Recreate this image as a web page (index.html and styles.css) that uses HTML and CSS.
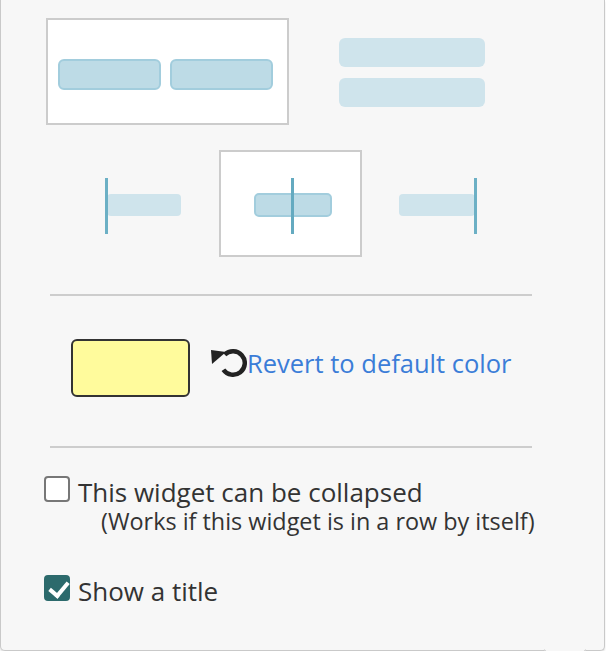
FILE: index.html
```html
<!DOCTYPE html>
<html lang="en">
<head>
  <meta charset="UTF-8">
  <title>Widget Settings</title>
  <link rel="stylesheet" href="styles.css">
</head>
<body>
  <div class="panel">

    <div class="row row-wide">
      <div class="opt opt-wide selected">
        <svg width="243" height="107" viewBox="0 0 243 107">
          <rect x="13" y="42" width="101" height="29" rx="5" class="bar-on"/>
          <rect x="125" y="42" width="101" height="29" rx="5" class="bar-on"/>
        </svg>
      </div>
      <div class="opt opt-wide">
        <svg width="243" height="107" viewBox="0 0 243 107">
          <rect x="49" y="20" width="146" height="29" rx="6" class="bar-off"/>
          <rect x="49" y="60" width="146" height="29" rx="6" class="bar-off"/>
        </svg>
      </div>
    </div>

    <div class="row row-narrow">
      <div class="opt opt-narrow">
        <svg width="143" height="107" viewBox="0 0 143 107">
          <rect x="35" y="44" width="74" height="22" rx="4" class="bar-off"/>
          <line x1="34.5" y1="28" x2="34.5" y2="84" class="line-off"/>
        </svg>
      </div>
      <div class="opt opt-narrow selected">
        <svg width="143" height="107" viewBox="0 0 143 107">
          <rect x="36" y="44" width="76" height="22" rx="4" class="bar-on"/>
          <line x1="73.5" y1="28" x2="73.5" y2="84" class="line-on"/>
        </svg>
      </div>
      <div class="opt opt-narrow">
        <svg width="143" height="107" viewBox="0 0 143 107">
          <rect x="33" y="44" width="76" height="22" rx="4" class="bar-off"/>
          <line x1="109.5" y1="28" x2="109.5" y2="84" class="line-off"/>
        </svg>
      </div>
    </div>

    <hr class="divider divider-top">

    <div class="color-row">
      <div class="swatch"></div>
      <a class="revert" href="#">
        <svg class="revert-icon" width="38" height="30" viewBox="0 0 38 30">
          <path d="M15.7 6.7 A11.75 11.75 0 1 1 14.4 21.7" fill="none" stroke="#222" stroke-width="4.5"/>
          <polygon points="2,2 17,4 3,16" fill="#222"/>
        </svg>
        <span>Revert to default color</span>
      </a>
    </div>

    <hr class="divider divider-bottom">

    <label class="check check-collapse">
      <input type="checkbox">
      <span class="check-text">
        This widget can be collapsed
        <span class="check-note">(Works if this widget is in a row by itself)</span>
      </span>
    </label>

    <label class="check check-title">
      <input type="checkbox" checked>
      <span class="check-text">Show a title</span>
    </label>

    <div class="notch"></div>
  </div>
</body>
</html>
```

FILE: styles.css
```css
* {
  box-sizing: border-box;
  margin: 0;
  padding: 0;
}

body {
  background: #ffffff;
  font-family: 'Open Sans', 'Lato', sans-serif;
  color: #333333;
}

.panel {
  position: relative;
  width: 605px;
  height: 651px;
  background: #f7f7f7;
  border: 1px solid #c9c9c9;
  border-top: none;
  border-radius: 0 0 5px 5px;
  box-shadow: 0 2px 2px rgba(0, 0, 0, 0.12);
}

/* layout choices */
.row {
  display: flex;
}

.row-wide {
  padding-top: 18px;
  margin-left: 45px;
  gap: 1px;
}

.row-narrow {
  margin-top: 25px;
  margin-left: 71px;
  gap: 4px;
}

.opt {
  height: 107px;
  border: 2px solid transparent;
  display: flex;
  align-items: center;
  justify-content: center;
  cursor: pointer;
}

.opt svg {
  display: block;
  flex: none;
}

.opt-wide {
  width: 243px;
}

.opt-narrow {
  width: 143px;
}

.opt.selected {
  background: #ffffff;
  border-color: #cccccc;
}

.bar-on {
  fill: #bddbe6;
  stroke: #a2cddd;
  stroke-width: 2;
}

.bar-off {
  fill: #cfe4ec;
}

.line-on {
  stroke: #64aac0;
  stroke-width: 3;
}

.line-off {
  stroke: #6cb0c5;
  stroke-width: 3;
}

.divider {
  border: none;
  height: 2px;
  background: #cdcdcd;
  margin-left: 49px;
  width: 482px;
}

.divider-top {
  margin-top: 37px;
}

.divider-bottom {
  margin-top: 49px;
}

/* colour */
.color-row {
  display: flex;
  align-items: flex-start;
  margin-top: 43px;
  margin-left: 70px;
}

.swatch {
  width: 119px;
  height: 58px;
  background: #fffb9c;
  border: 2px solid #333333;
  border-radius: 6px;
}

.revert {
  display: flex;
  align-items: flex-start;
  margin-top: 9px;
  margin-left: 19px;
  color: #3b7dd8;
  text-decoration: none;
  font-size: 25.5px;
  line-height: 30px;
}

.revert-icon {
  display: block;
}

/* checkboxes */
.check {
  display: flex;
  align-items: flex-start;
  margin-left: 43px;
  font-size: 26px;
  line-height: 28px;
  cursor: pointer;
}

.check-collapse {
  margin-top: 28px;
}

.check-title {
  margin-top: 41px;
}

.check input {
  appearance: none;
  -webkit-appearance: none;
  width: 26px;
  height: 26px;
  flex: none;
  border: 2px solid #777777;
  border-radius: 4px;
  background: #ffffff;
  margin-right: 8px;
  position: relative;
}

.check input:checked {
  background: #2c6a6c;
  border-color: #2c6a6c;
}

.check input:checked::after {
  content: "";
  position: absolute;
  left: 7px;
  top: 1px;
  width: 8px;
  height: 15px;
  border: solid #ffffff;
  border-width: 0 4px 4px 0;
  transform: rotate(40deg);
}

.check-text {
  margin-top: 2px;
}

.check-note {
  display: block;
  font-size: 23.4px;
  line-height: 26px;
  margin-top: 2px;
  margin-left: 23px;
}

/* pointer under the panel */
.notch {
  position: absolute;
  left: 549px;
  bottom: -15px;
  width: 30px;
  height: 30px;
  background: #f7f7f7;
  border: solid #c9c9c9;
  border-width: 0 1px 1px 0;
  transform: rotate(45deg);
}
```
